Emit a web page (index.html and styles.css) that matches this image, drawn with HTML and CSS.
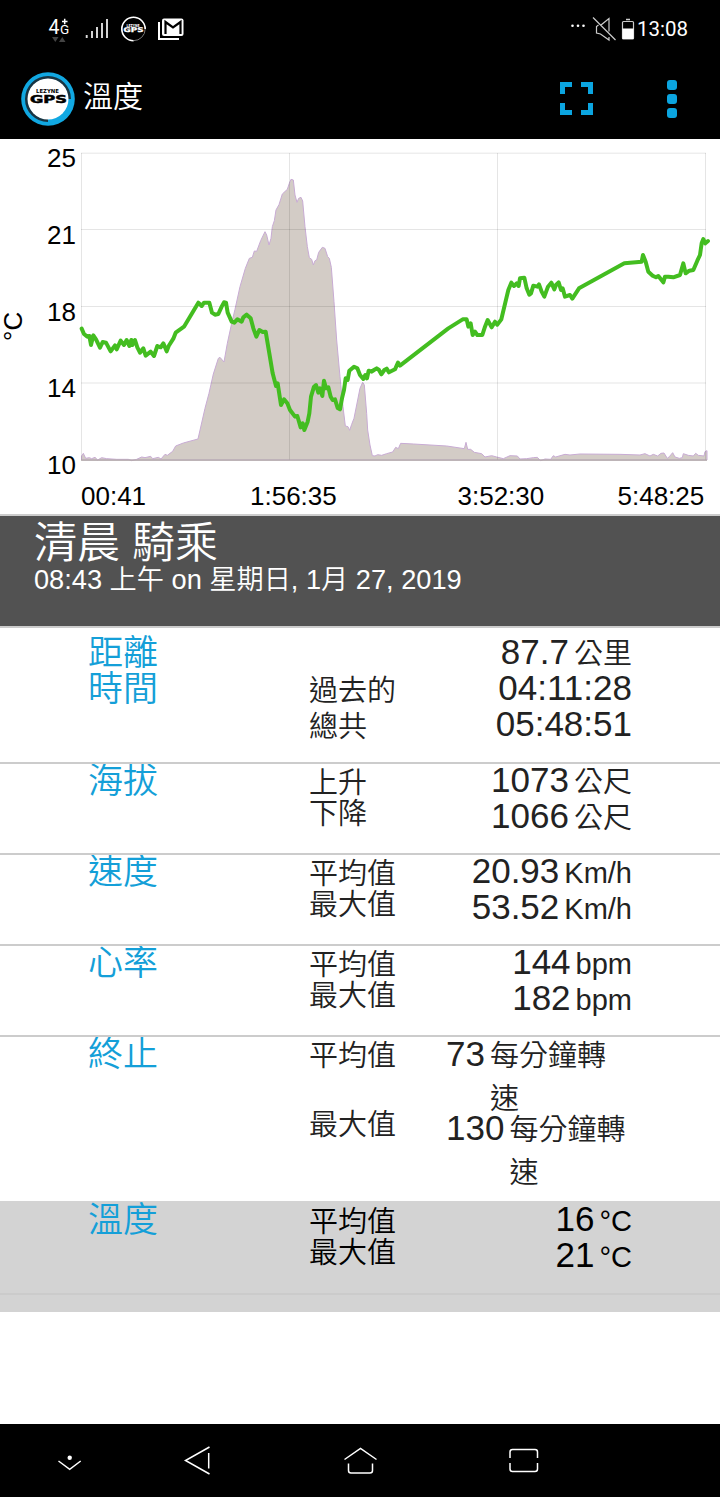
FILE: index.html
```html
<!DOCTYPE html>
<html lang="zh-Hant">
	<head>
		<meta charset="UTF-8" />
		<meta name="viewport" content="width=device-width, initial-scale=1.0" />
		<title>溫度</title>
		<link rel="stylesheet" href="styles.css">
	</head>
	<body>
		<div class="status-bar">
			<svg class="status-left" width="150" height="32" viewBox="44 12 150 32">
				<text class="net" x="48.500" y="33.500" font-size="19.500">4</text>
				<text class="net" x="60" y="34" font-size="13.500">G</text>
				<path d="M62 21.500h5.500M64.700 18.800v5.500" stroke="#fff" stroke-width="1.500" />
				<path d="M52 37h6.500l-3.200 5zM59 42h6.500l-3.200-5z" fill="#444" />
				<path d="M86.700 38v-3M92 38v-7M97 38v-11M102 38v-15M107 38v-19" stroke="#ddd" stroke-width="1.900" />
				<circle cx="133.500" cy="29" r="11.700" fill="none" stroke="#777" stroke-width="1" />
				<path d="M133.500 40.700A11.700 11.700 0 1 1 145.200 29" fill="none" stroke="#fff" stroke-width="1.600" />
				<text class="logo-text" x="126.500" y="26.500" font-size="4" textLength="13" lengthAdjust="spacingAndGlyphs" fill="#fff">LEZYNE</text>
				<text class="logo-text" x="123.500" y="31.500" font-size="6.500" textLength="20" lengthAdjust="spacingAndGlyphs" fill="#fff" stroke="#fff" stroke-width="0.300">GPS</text>
				<path d="M159 22v17h20" fill="none" stroke="#fff" stroke-width="2" />
				<rect x="162" y="18.500" width="21.500" height="17.500" rx="2" fill="#fff" />
				<path d="M165.500 34V22l7.500 5.500 7.500-5.500V34" fill="none" stroke="#000" stroke-width="2.200" />
			</svg>
			<div class="status-right">
				<svg width="68" height="32" viewBox="568 12 68 32">
					<g fill="#fff">
						<circle cx="572.500" cy="25.700" r="1.300" />
						<circle cx="578" cy="25.700" r="1.300" />
						<circle cx="583.500" cy="25.700" r="1.300" />
					</g>
					<path d="M609 31.500V18.500l-8 6.500M598.500 25l-2 1.500v6.500l4 1 8.500 6V37M593 17.500l22.500 22.500" fill="none" stroke="#ccc" stroke-width="1.200" />
					<path d="M626 19.500h4" stroke="#ccc" stroke-width="1.500" />
					<rect x="622.500" y="21.500" width="11" height="17.500" rx="1" fill="none" stroke="#ccc" stroke-width="1.200" />
					<rect x="622.500" y="28.500" width="11" height="10.500" fill="#fff" />
				</svg>
				<span class="clock">13:08</span>
			</div>
		</div>

		<div class="app-bar">
			<svg class="logo" width="54" height="54" viewBox="0 0 54 54">
				<circle cx="27" cy="27" r="26.800" fill="#11a8e2" />
				<path d="M27 48.500A21.500 21.500 0 1 1 48.500 27" fill="none" stroke="#183442" stroke-width="3" />
				<circle cx="27" cy="27" r="20.500" fill="#fff" />
				<text class="logo-text" x="15" y="20.500" font-size="5.500" textLength="23" lengthAdjust="spacingAndGlyphs">LEZYNE</text>
				<text class="logo-text" x="9" y="31" font-size="10.500" textLength="37" lengthAdjust="spacingAndGlyphs" stroke="#000" stroke-width="0.500">GPS</text>
			</svg>
			<h1>溫度</h1>
			<svg class="expand" width="33" height="33" viewBox="0 0 33 33">
				<path d="M2.500 12V2.500H12M21 2.500h9.500V12M30.500 21v9.500H21M12 30.500H2.500V21" fill="none" stroke="#0ba5e0" stroke-width="5" />
			</svg>
			<div class="menu">
				<i></i>
				<i></i>
				<i></i>
			</div>
		</div>

		<svg class="chart" width="720" height="374" viewBox="0 0 720 374">
			<g transform="scale(0.33333)">
				<!-- elevation -->
				<path class="elevation" d="M245 960V948L250 940L257 955L268 953L275 956L285 952L293 960L305 953L320 956L350 958L385 958L395 962L410 958L425 951L435 953L452 949L458 956L475 952L483 957L495 943L502 946L518 934L527 918L550 909L594 897L615 805L627 760L640 702L655 655L660 652L672 666L682 610L695 550L705 508L720 440L736 385L748 355L757 352L763 333L770 334L782 302L795 275L800 285L807 315L813 295L817 260L823 242L828 210L837 194L847 162L862 148L868 130L873 118L880 120L885 165L891 187L896 175L903 172L908 183L915 260L922 320L928 353L935 358L940 375L945 362L950 360L956 337L967 322L975 325L983 350L988 355L994 382L1002 485L1010 600L1020 710L1029 800L1036 858L1044 860L1049 871L1055 853L1062 835L1070 795L1080 745L1088 727L1093 735L1100 820L1103 870L1110 915L1117 947L1125 948L1133 944L1145 946L1160 941L1178 936L1187 922L1195 926L1202 910L1240 912L1340 918L1393 926L1398 907L1403 928L1412 928L1423 937L1445 941L1455 951L1475 947L1490 951L1510 956L1530 947L1552 948L1560 957L1580 956L1600 953L1612 952L1622 962L1635 957L1652 958L1660 947L1667 951L1695 943L1710 945L1740 942L1860 943L1920 945L1935 941L1950 948L1960 943L1973 948L1983 940L1992 939L2002 955L2008 950L2018 938L2025 951L2038 955L2047 953L2050 941L2065 946L2080 948L2087 940L2095 946L2112 948L2115 935L2121 932V960Z" />
			</g>
			<path class="grid" d="M81 13.200H706M81 89.500H706M81 166.500H706M81 243H706M81.500 13V320M289.500 13V320M497.500 13V320M705.500 13V320" />
			<path class="base" d="M81 320.200H707" />
			<g transform="scale(0.33333)">
				<!-- temperature -->
				<path class="temperature" d="M245 566L252 582L262 590L268 588L273 615L280 586L288 598L300 623L308 606L318 608L332 634L345 616L350 628L362 602L372 615L380 600L388 618L394 600L397 615L405 600L412 622L420 638L430 625L437 647L452 635L462 648L472 618L482 622L490 610L500 634L506 618L520 596L527 578L552 560L595 488L605 498L612 488L628 488L636 518L645 524L655 522L665 500L672 487L678 488L683 518L695 545L703 548L712 538L725 545L730 532L740 524L752 535L760 565L769 590L778 570L788 576L797 575L808 640L818 700L828 738L833 730L843 795L852 778L862 790L870 810L885 830L892 828L902 862L908 850L913 870L923 845L928 820L933 770L942 740L948 735L955 758L960 745L967 768L972 722L978 745L985 742L992 770L998 780L1005 778L1013 804L1020 808L1026 775L1032 750L1037 715L1043 720L1048 692L1062 680L1072 685L1080 705L1090 717L1096 705L1101 715L1106 692L1115 695L1122 690L1130 685L1137 690L1144 703L1153 690L1160 686L1167 697L1185 688L1194 668L1200 677L1345 565L1388 538L1400 538L1405 560L1412 550L1418 585L1425 575L1432 585L1447 585L1455 560L1463 540L1475 562L1485 545L1492 554L1504 538L1525 450L1534 428L1542 438L1550 430L1556 438L1560 415L1573 413L1580 445L1588 464L1593 460L1600 437L1612 440L1617 433L1625 455L1633 470L1644 440L1654 428L1663 448L1668 435L1676 427L1683 450L1688 445L1695 470L1710 465L1717 476L1737 445L1873 370L1925 365L1929 345L1937 365L1945 395L1958 407L1968 412L1975 408L1990 427L1995 410L2005 410L2020 412L2040 405L2050 370L2057 400L2068 392L2080 390L2092 362L2100 345L2105 310L2110 297L2116 310L2124 303" />
			</g>
			<g class="axis" text-anchor="end">
				<text x="76" y="27">25</text>
				<text x="76" y="103.500">21</text>
				<text x="76" y="180.500">18</text>
				<text x="76" y="257">14</text>
				<text x="76" y="333.500">10</text>
			</g>
			<g class="axis">
				<text x="81" y="364.500">00:41</text>
				<text x="250" y="364.500">1:56:35</text>
				<text x="457.500" y="364.500">3:52:30</text>
				<text x="617.500" y="364.500">5:48:25</text>
				<text transform="translate(21.500 201) rotate(-90)">°C</text>
			</g>
		</svg>

		<div class="ride">
			<h2>清晨 騎乘</h2>
			<p>08:43 上午 on 星期日, 1月 27, 2019</p>
		</div>

		<div class="row first">
			<div class="label">距離<br>時間</div>
			<div class="names"><span>過去的</span><span>總共</span></div>
			<div class="values">
				<div class="value">87.7<small>公里</small></div>
				<div class="value">04:11:28</div>
				<div class="value">05:48:51</div>
			</div>
		</div>
		<div class="row">
			<div class="label">海拔</div>
			<div class="names"><span>上升</span><span>下降</span></div>
			<div class="values">
				<div class="value">1073<small>公尺</small></div>
				<div class="value">1066<small>公尺</small></div>
			</div>
		</div>
		<div class="row">
			<div class="label">速度</div>
			<div class="names"><span>平均值</span><span>最大值</span></div>
			<div class="values">
				<div class="value">20.93<small>Km/h</small></div>
				<div class="value">53.52<small>Km/h</small></div>
			</div>
		</div>
		<div class="row">
			<div class="label">心率</div>
			<div class="names"><span>平均值</span><span>最大值</span></div>
			<div class="values">
				<div class="value">144<small>bpm</small></div>
				<div class="value">182<small>bpm</small></div>
			</div>
		</div>
		<div class="row cadence">
			<div class="label">終止</div>
			<div class="names"><span>平均值</span><span>最大值</span></div>
			<div class="values">
				<div class="value">73<small>每分鐘轉<br>速</small></div>
				<div class="value">130<small>每分鐘轉<br>速</small></div>
			</div>
		</div>
		<div class="row active">
			<div class="label">溫度</div>
			<div class="names"><span>平均值</span><span>最大值</span></div>
			<div class="values">
				<div class="value">16<small>°C</small></div>
				<div class="value">21<small>°C</small></div>
			</div>
		</div>
		<div class="row-end"></div>

		<div class="nav-bar">
			<svg width="720" height="73" viewBox="0 1424 720 73" fill="none" stroke="#fff" stroke-width="1.500">
				<circle cx="69.700" cy="1457.700" r="2.200" fill="#fff" stroke="none" />
				<path d="M58.500 1461l11.200 8.300 11-8.300" />
				<path d="M209.500 1447l-24 13.500 24 13.500M208.700 1453v15.500" />
				<path d="M344.500 1459.500l16-11 16 11M348.500 1463.500v7q0 2.500 2.500 2.500h19q2.500 0 2.500-2.500v-7" />
				<path d="M510 1458v-6q0-2.500 2.500-2.500h22.500q2.500 0 2.500 2.500v6M510 1463v6q0 2.500 2.500 2.500h22.500q2.500 0 2.500-2.500v-6" />
			</svg>
		</div>
	</body>
</html>
```
FILE: styles.css
```css
* {
	box-sizing: border-box;
}
body {
	margin: 0;
	height: 1497px;
	display: flex;
	flex-direction: column;
	background: #fff;
	color: #222;
	font-family: "Liberation Sans", "Noto Sans CJK TC", sans-serif;
	font-weight: 350;
}
svg {
	display: block;
}
h1,
h2,
p {
	margin: 0;
	font-weight: 350;
}
.status-bar {
	display: flex;
	justify-content: space-between;
	height: 58px;
	padding: 12px 32px 0 44px;
	background: #000;
	color: #fff;
}
.status-right {
	display: flex;
}
.clock {
	font: 20.5px/35px Roboto, sans-serif;
	margin-left: 1px;
}
.net {
	font-family: Roboto, sans-serif;
	font-weight: 400;
	fill: #fff;
}
.logo-text {
	font-family: "DejaVu Sans", sans-serif;
	font-weight: bold;
}
.app-bar {
	display: flex;
	align-items: center;
	height: 81px;
	padding: 0 43px 0 21px;
	background: #000;
	color: #fff;
}
.app-bar h1 {
	flex: 1;
	margin-left: 8px;
	padding-bottom: 3px;
	font-size: 30px;
	line-height: 40px;
}
.menu {
	display: flex;
	flex-direction: column;
	gap: 4px;
	margin-left: 74px;
}
.menu i {
	width: 10px;
	height: 10px;
	border-radius: 3px;
	background: #0ba5e0;
}
.chart {
	margin-top: 1px;
}
.elevation {
	fill: #d3ccc6;
	stroke: #c8abd4;
	stroke-width: 3;
}
.grid {
	fill: none;
	stroke: rgba(0, 0, 0, 0.1);
}
.base {
	stroke: #b0a9a6;
	stroke-width: 1.3;
}
.temperature {
	fill: none;
	stroke: #43bd20;
	stroke-width: 12;
	stroke-linejoin: round;
	stroke-linecap: round;
}
.axis {
	font-size: 26px;
	fill: #000;
}
.ride {
	height: 114px;
	padding: 4px 34px 0;
	background: #525252;
	border-top: 2px solid #ccc;
	border-bottom: 2px solid #ccc;
	color: #fff;
}
.ride h2 {
	font-size: 43px;
	line-height: 46px;
}
.ride p {
	font-size: 27.2px;
	line-height: 28px;
}
.row {
	display: flex;
	height: 91px;
	padding: 0 88px;
	border-bottom: 2px solid #ccc;
	overflow: hidden;
}
.label {
	width: 221px;
	margin-top: -1px;
	font-size: 35px;
	line-height: 36px;
	color: #149fd8;
}
.names {
	display: flex;
	flex-direction: column;
	padding-top: 4px;
	font-size: 29px;
	line-height: 31px;
}
.values {
	flex: 1;
	margin-top: -2px;
}
.value {
	display: flex;
	justify-content: flex-end;
	align-items: baseline;
	height: 36px;
	font-size: 35px;
	line-height: 36px;
}
.value small {
	margin-left: 5px;
	font-size: 29px;
	white-space: nowrap;
}
.first {
	height: 136px;
	padding-top: 8px;
}
.first .names {
	padding-top: 37px;
	line-height: 36px;
}
.cadence {
	height: 164px;
	border-bottom: none;
}
.cadence .names {
	gap: 38px;
}
.cadence .value {
	justify-content: flex-start;
	height: 74px;
	margin-left: 50px;
}
.cadence small {
	line-height: 43px;
}
.active {
	height: 94px;
	padding-top: 2px;
	background: #d3d3d3;
	border-color: #cbcbcb;
	color: #000;
}
.row-end {
	height: 17px;
	background: #d3d3d3;
}
.nav-bar {
	margin-top: auto;
	background: #000;
}
```
